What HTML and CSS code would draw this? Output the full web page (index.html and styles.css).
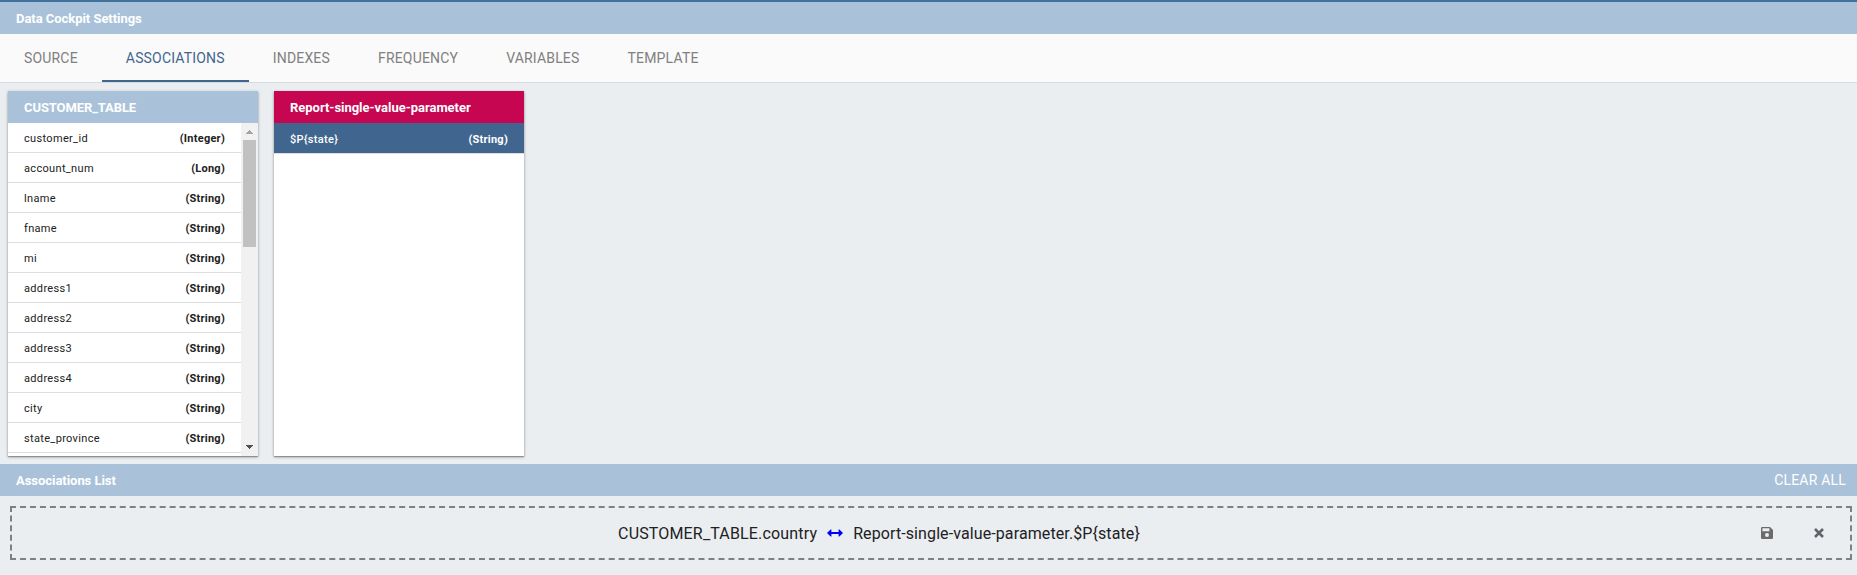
FILE: index.html
```html
<!DOCTYPE html>
<html lang="en">
<head>
<meta charset="utf-8">
<title>Data Cockpit Settings</title>
<link rel="stylesheet" href="styles.css">
</head>
<body>
<header class="bar bar-top"><h1 class="bar-title">Data Cockpit Settings</h1></header>
<nav class="tabs">
  <a class="tab">SOURCE</a>
  <a class="tab tab-active">ASSOCIATIONS</a>
  <a class="tab">INDEXES</a>
  <a class="tab">FREQUENCY</a>
  <a class="tab">VARIABLES</a>
  <a class="tab">TEMPLATE</a>
</nav>
<main class="cards">
  <section class="card">
    <h2 class="card-head card-head-caps">CUSTOMER_TABLE</h2>
    <div class="card-body">
      <ul class="rows">
        <li class="row"><span>customer_id</span><b class="type">(Integer)</b></li>
        <li class="row"><span>account_num</span><b class="type">(Long)</b></li>
        <li class="row"><span>lname</span><b class="type">(String)</b></li>
        <li class="row"><span>fname</span><b class="type">(String)</b></li>
        <li class="row"><span>mi</span><b class="type">(String)</b></li>
        <li class="row"><span>address1</span><b class="type">(String)</b></li>
        <li class="row"><span>address2</span><b class="type">(String)</b></li>
        <li class="row"><span>address3</span><b class="type">(String)</b></li>
        <li class="row"><span>address4</span><b class="type">(String)</b></li>
        <li class="row"><span>city</span><b class="type">(String)</b></li>
        <li class="row"><span>state_province</span><b class="type">(String)</b></li>
      </ul>
      <div class="scroll">
        <svg class="scroll-arrow" viewBox="0 0 17 17" shape-rendering="crispEdges"><path fill="#a3a3a3" d="M8 7h1v1h1v1h1v1h1v1H5v-1h1V9h1V8h1z"/></svg>
        <div class="thumb"></div>
        <svg class="scroll-arrow" viewBox="0 0 17 17" shape-rendering="crispEdges"><path fill="#505050" d="M5 6h7v1h-1v1h-1v1H9v1H8V9H7V8H6V7H5z"/></svg>
      </div>
    </div>
  </section>
  <section class="card">
    <h2 class="card-head card-head-param">Report-single-value-parameter</h2>
    <div class="card-body">
      <ul class="rows">
        <li class="row row-selected"><span>$P{state}</span><b class="type">(String)</b></li>
      </ul>
    </div>
  </section>
</main>
<div class="bar"><h2 class="bar-title">Associations List</h2><button class="clear">CLEAR ALL</button></div>
<div class="assoc">
  <div class="assoc-text">
    <span class="assoc-left">CUSTOMER_TABLE.country</span>
    <svg class="link-icon" viewBox="0 0 16 8"><path fill="#00f" d="M0 4l3.6-3.5h.8V3h7.2V.5h.8L16 4l-3.6 3.5h-.8V5H4.4v2.5h-.8z"/></svg>
    <span class="assoc-right">Report-single-value-parameter.$P{state}</span>
  </div>
  <button class="icon-btn"><svg class="save-icon" viewBox="0 0 12 12"><path fill="#6b6b6b" fill-rule="evenodd" d="M1.2 0H9l3 3v7.8a1.2 1.2 0 0 1-1.2 1.2H1.2A1.2 1.2 0 0 1 0 10.800V1.200A1.200 1.200 0 0 1 1.200 0zM1.400 1.300v3h7v-3zM6 6.100a2 2 0 1 0 0 4 2 2 0 0 0 0-4z"/></svg></button>
  <button class="icon-btn"><svg class="close-icon" viewBox="0 0 10 10"><path stroke="#606468" stroke-width="2.500" d="M1 1l8 8M9 1L1 9"/></svg></button>
</div>
</body>
</html>
```
FILE: styles.css
```css
* { box-sizing: border-box; }
body {
  margin: 0;
  height: 575px;
  overflow: hidden;
  background: #eaeef1;
  color: #212121;
  font-family: Roboto, sans-serif;
}
h1, h2, ul { margin: 0; padding: 0; list-style: none; }
button { border: 0; padding: 0; background: none; font-family: inherit; }
svg { display: block; }
.bar {
  display: flex;
  align-items: center;
  justify-content: space-between;
  height: 32px;
  padding: 0 11px 0 16px;
  background: #a9c2da;
  color: #fff;
}
.bar-top { height: 34px; border-top: 2px solid #40709c; }
.bar-title { font-size: 13px; font-weight: 700; letter-spacing: -0.04px; }
.clear { color: #fff; font-size: 14px; letter-spacing: 0.2px; }
.tabs {
  display: flex;
  height: 49px;
  background: #fafafa;
  border-bottom: 1px solid #d9dcdf;
}
.tab {
  height: 48px;
  padding: 0 24px;
  font-size: 14px;
  line-height: 48px;
  letter-spacing: 0.18px;
  color: #808080;
}
.tab-active { color: #3f668f; border-bottom: 2px solid #3f668f; }
.cards { display: flex; gap: 16px; height: 381px; padding: 8px; }
.card {
  display: flex;
  flex-direction: column;
  width: 250px;
  background: #fff;
  box-shadow: 0 1px 3px rgba(0,0,0,.3), 0 1px 1px rgba(0,0,0,.25);
}
.card-head {
  height: 32px;
  padding-left: 16px;
  background: #a9c2da;
  color: #fff;
  font-size: 13px;
  font-weight: 700;
  line-height: 33px;
}
.card-head-caps { letter-spacing: -0.1px; }
.card-head-param { background: #c60651; letter-spacing: -0.03px; }
.card-body { display: flex; height: 333px; overflow: hidden; }
.rows { flex: 1; }
.row {
  display: flex;
  align-items: center;
  justify-content: space-between;
  height: 30px;
  padding: 2px 16px 0;
  border-bottom: 1px solid #dedede;
  font-size: 11px;
  letter-spacing: 0.33px;
}
.type { font-weight: 700; letter-spacing: 0.25px; }
.row-selected { background: #40668f; background-clip: padding-box; color: #fff; font-weight: 500; height: 31px; letter-spacing: 0.3px; }
.scroll { display: flex; flex-direction: column; width: 17px; background: #f1f1f1; }
.scroll-arrow { width: 17px; height: 17px; }
.thumb { width: 13px; height: 107px; margin: 0 auto auto; background: #c1c1c1; }
.assoc {
  display: flex;
  align-items: center;
  height: 54px;
  margin: 10px 5px 0 10px;
  padding-right: 5px;
  border: 2px dashed #808080;
}
.assoc-text {
  display: flex;
  flex: 1;
  align-items: center;
  justify-content: center;
  padding-left: 5px;
  font-size: 16px;
}
.assoc-left { letter-spacing: 0.16px; }
.assoc-right { letter-spacing: 0.1px; }
.link-icon { width: 16px; height: 8px; margin: 0 10px; }
.icon-btn { display: flex; justify-content: center; width: 52px; }
.save-icon { width: 12px; height: 12px; }
.close-icon { width: 10px; height: 10px; }
```
